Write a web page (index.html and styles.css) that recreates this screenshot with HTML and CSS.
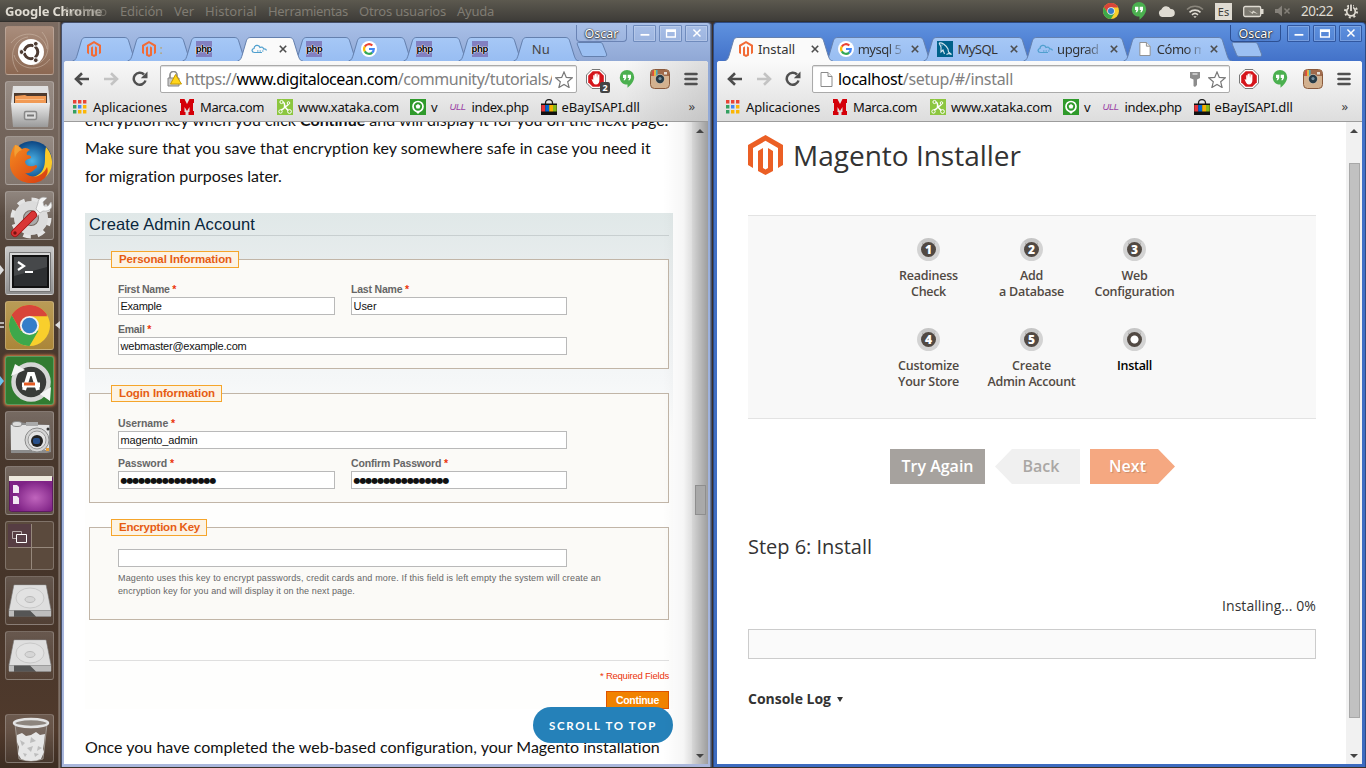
FILE: index.html
```html
<!DOCTYPE html>
<html lang="es">
<head>
<meta charset="utf-8">
<title>Magento Installer</title>
<link rel="stylesheet" href="styles.css">
</head>
<body>
<svg class="defs" width="0" height="0">
  <defs>
    <linearGradient id="gTab" x1="0" y1="0" x2="0" y2="1"><stop offset="0" stop-color="#a6c8f6"/><stop offset="1" stop-color="#98bdf2"/></linearGradient>
    <linearGradient id="gSteel" x1="0" y1="0" x2="0" y2="1"><stop offset="0" stop-color="#ededed"/><stop offset="1" stop-color="#9a9a9a"/></linearGradient>
    <linearGradient id="gFox" x1="0" y1="0" x2="1" y2="1"><stop offset="0" stop-color="#f58a1f"/><stop offset="1" stop-color="#d63c12"/></linearGradient>
    <radialGradient id="gGlobe"><stop offset="0" stop-color="#4ab4e8"/><stop offset="1" stop-color="#0b4583"/></radialGradient>
    <radialGradient id="gPurple" cx=".6" cy=".6"><stop offset="0" stop-color="#c065bd"/><stop offset="1" stop-color="#7f2386"/></radialGradient>
  </defs>
  <symbol id="magento" viewBox="0 0 35 40"><path fill="currentColor" d="M17.500 0 35 10v20l-5 3V13L17.500 5.800 5 13v20l-5-3V10z"/><path fill="currentColor" d="M10 16l5-3v20l2.500 1.500L20 33V13l5 3v20l-7.500 4L10 36z"/></symbol>
  <symbol id="google" viewBox="0 0 16 16"><circle cx="8" cy="8" r="8" fill="#fff"/><g fill="none" stroke-width="2.200"><path stroke="#ea4335" d="M3.800 5.600A4.800 4.800 0 0 1 11.300 4.500"/><path stroke="#fbbc05" d="M3.800 5.500a4.800 4.800 0 0 0 0 5"/><path stroke="#34a853" d="M3.800 10.400a4.800 4.800 0 0 0 7.400 1.200"/><path stroke="#4285f4" d="M8 8h4.800a4.800 4.800 0 0 1-1.700 3.700"/></g></symbol>
  <symbol id="docloud" viewBox="0 0 16 10"><path fill="none" stroke="#4f9fce" stroke-width="1.200" d="M11 8.500H3.500C.5 8.500.2 5 3 4.500 3 1 8 0 9 3.500c2-1 3.500 0 3.500 1.500 2-.2 3 .6 2.500 1.500"/><path stroke="#4f9fce" stroke-dasharray="1.500 1" d="M6 7h7"/></symbol>
  <symbol id="page" viewBox="0 0 12 15"><path fill="#fff" stroke="#8a8a8a" d="M.5.5h7l4 4v10H.5z"/><path fill="#eee" stroke="#8a8a8a" d="M7.500.5v4h4"/></symbol>
  <symbol id="dolphin" viewBox="0 0 16 16"><path fill="#00618a" d="M0 0h16v16H0z"/><path fill="none" stroke="#d5e6ef" stroke-width="1.100" d="M2 2c3-.8 7 2 9 6l.5 3 3 2.500-3-1-2 1M2 2l2 4v5l2-2 1.500 4"/><circle cx="5" cy="4" r=".6" fill="#fff"/></symbol>
  <symbol id="close" viewBox="0 0 8 8"><path stroke="#4d4d4d" stroke-width="1.600" d="M.8.8l6.400 6.400M7.200.8L.8 7.200"/></symbol>
  <symbol id="back" viewBox="0 0 16 14"><path fill="none" stroke="currentColor" stroke-width="2.600" d="M15 7H2.500M8 1.200L2 7l6 5.800"/></symbol>
  <symbol id="reload" viewBox="0 0 16 16"><path fill="none" stroke="#505050" stroke-width="2.500" d="M13.500 9.500A6 6 0 1 1 12 3.500"/><path fill="#505050" d="M15.500.5V7.200H8.800z"/></symbol>
  <symbol id="lock" viewBox="0 0 15 16"><path fill="none" stroke="#8d8d8d" stroke-width="1.700" d="M3 8V4a3.500 3.500 0 0 1 7 0v4"/><path fill="#c9c9c9" stroke="#858585" d="M1 7h11v8H1z"/><path fill="#ffd51a" stroke="#c79a00" d="M8.500 3.500l6 9.500H3.500z"/></symbol>
  <symbol id="star" viewBox="0 0 18 17"><path fill="#fff" stroke="#777" stroke-width="1.200" d="M9 1l2.300 5.400 5.900.5-4.500 3.900 1.400 5.700L9 13.400l-5.100 3.100 1.400-5.700L.8 6.900l5.900-.5z"/></symbol>
  <symbol id="key" viewBox="0 0 12 16"><path fill="#8c8c8c" d="M1 1h10v6L8 8.500V14l-2 2-1.500-1V8.500L1 7z"/><path stroke="#fff" stroke-width="1.200" d="M3.500 3h5"/></symbol>
  <symbol id="abp" viewBox="0 0 20 20"><path fill="#fff" stroke="#777" d="M6 .5h8L19.500 6v8L14 19.500H6L.5 14V6z"/><path fill="#d5141b" d="M6.700 2.200h6.600l4.500 4.500v6.600l-4.500 4.500H6.700l-4.500-4.500V6.700z"/><path fill="#fff" d="M5.500 10l1.700.7V6.300h1.200v3l.3-4.500H10V9l.3-4.500h1.300V9l.5-3.500h1.300V11c0 2.800-1.200 4.500-3.400 4.500-2.300 0-3.300-2-4.500-5.500z"/></symbol>
  <symbol id="hangouts" viewBox="0 0 16 18"><path fill="#4bb04f" d="M8 0a7.200 7.200 0 0 1 7.200 7.200c0 4.300-3.700 8-6.700 10.500v-3.200C3 14.600.8 11 .8 7.200A7.200 7.200 0 0 1 8 0z"/><path fill="#fff" d="M4 4.800h3.300V8L6 10.300H4.500L5.500 8H4zM8.700 4.800H12V8l-1.300 2.300H9.200l1-2.300H8.700z"/></symbol>
  <symbol id="insta" viewBox="0 0 20 20"><rect x=".5" y=".5" width="19" height="19" rx="4" fill="#d3b18f" stroke="#8a5a3c"/><path fill="#a06a4b" d="M1 7V4.500Q1 1 4.500 1h11Q19 1 19 4.500V7z"/><path fill="#e84a3b" d="M2.500 1.500h1.700V7H2.500z"/><path fill="#f2c640" d="M4.200 1h1.700v6H4.200z"/><path fill="#4daebd" d="M5.900 1h1.700v6H5.900z"/><circle cx="10" cy="10" r="5" fill="#c9b7a2"/><circle cx="10" cy="10" r="4.200" fill="#283b47"/><circle cx="10" cy="9.600" r="1.600" fill="#76909e"/><rect x="14" y="3" width="3" height="2.500" fill="#e5dfd6"/></symbol>
  <symbol id="menu" viewBox="0 0 14 14"><path stroke="#505050" stroke-width="2.600" stroke-linecap="round" d="M1.500 2h11M1.500 7h11M1.500 12h11"/></symbol>
  <symbol id="apps" viewBox="0 0 14 14"><path fill="#ea4335" d="M0 0h3.400v3.400H0zM5 0h3.400v3.400H5zM10 0h3.400v3.400H10z"/><path fill="#34a060" d="M0 5h3.400v3.400H0zM0 10h3.400v3.400H0z"/><path fill="#4285f4" d="M5 5h3.400v3.400H5z"/><path fill="#fbb605" d="M10 5h3.400v3.400H10zM5 10h3.400v3.400H5zM10 10h3.400v3.400H10z"/></symbol>
  <symbol id="marca" viewBox="0 0 14 16"><path fill="#d40009" d="M0 0h4.500L7 5l2.500-5H14v4h-1v8h1v4H8.500v-3h1V8L7 12 4.500 8v5h1v3H0v-4h1V4H0z"/></symbol>
  <symbol id="xataka" viewBox="0 0 16 16"><path fill="#8cc63f" d="M0 0h16v16H0z"/><path fill="none" stroke="#fff" stroke-width="1.500" d="M5 3c2 0 3 1.500 2.500 5C7 11 5 9.500 3.500 12M7.500 8c2-2 4 0 4-4M8 8l4 4.500"/><g fill="#8cc63f" stroke="#fff"><circle cx="4.500" cy="3" r="1.600"/><circle cx="11.500" cy="4" r="1.300"/><circle cx="3.500" cy="12.500" r="1.700"/><circle cx="12.500" cy="12.500" r="1.900"/></g></symbol>
  <symbol id="ball" viewBox="0 0 16 16"><path fill="#2f9a2b" d="M0 0h16v16H0z"/><circle cx="8" cy="7.500" r="5" fill="none" stroke="#fff" stroke-width="1.700"/><path fill="#fff" d="M8 5l2.400 1.700-.9 2.800h-3l-.9-2.800zM6 13h4l-2 2z"/></symbol>
  <symbol id="ebay" viewBox="0 0 16 16"><path fill="none" stroke="#222" stroke-width="1.300" d="M4.500 6V4a3.500 3.500 0 0 1 7 0v2"/><path fill="#111" d="M0 4.500h16V16H0z"/><path fill="#e53238" d="M.3 6h4v6.500h-4z"/><path fill="#0064d2" d="M4.300 6h3.900v6.500H4.300z"/><path fill="#f5af02" d="M8.200 6H12v6.500H8.200z"/><path fill="#86b817" d="M12 6h3.700v6.500H12z"/></symbol>
  <symbol id="tab55" viewBox="0 0 66 24"><path d="M.5 24C4 23.500 4.500 20 5.500 17L9 5C10 1.500 11 .5 14 .5H52C55 .5 56 1.500 57 5l4 13c1 3 2 6 5 6"/></symbol>
  <symbol id="tab100" viewBox="0 0 110 24"><path d="M.5 24C4 23.500 4.500 20 5.500 17L9 5C10 1.500 11 .5 14 .5H95C98 .5 99 1.500 100 5l4 13c1 3 2 6 5 6"/></symbol>
  <symbol id="newtab" viewBox="0 0 32 15"><path d="M2.500.5H24c2 0 2.500 1 3 2.500L30.500 12c.5 1.500 0 2.500-2 2.500H9c-2 0-3-.5-3.500-2L1.500 3C1 1.500 1 .5 2.500.5z"/></symbol>
  <symbol id="chrome" viewBox="0 0 40 40"><circle cx="20" cy="20" r="20" fill="#f8cf2c"/><path fill="#d8453a" d="M2.700 10A20 20 0 0 1 37.300 10H20L11.300 25z"/><path fill="#3da84b" d="M2.700 10A20 20 0 0 0 20 40L28.700 25H11.300z"/><path fill="#d8453a" d="M2.700 10A20 20 0 0 1 37.300 11H20v5l-8.700 4z"/><circle cx="20" cy="20" r="9.300" fill="#f1f1f1"/><circle cx="20" cy="20" r="7.500" fill="#357dc9"/></symbol>
  <symbol id="disk" viewBox="0 0 44 34"><path fill="url(#gSteel)" stroke="#888" stroke-width=".7" d="M6 1h32l5 25v6H1v-6z"/><path fill="#555" d="M1 26.500h42v6H1z"/><path fill="#bdbdbd" d="M1 26.500h5v6H1zM22 26.500h21v6H28z"/><path fill="#dedede" d="M6.500 1.500h31l5 24.500h-41z"/><ellipse cx="22" cy="14" rx="14" ry="10" fill="#e2e2e2" stroke="#c9c9c9"/><ellipse cx="22" cy="15.500" rx="5" ry="3" fill="#d6d6d6" stroke="#bababa"/></symbol>
  <symbol id="win-min" viewBox="0 0 23 17"><path stroke="#fff" stroke-width="2" d="M7 10h10"/></symbol>
  <symbol id="win-max" viewBox="0 0 23 17"><path fill="none" stroke="#fff" stroke-width="1.500" d="M7 4.500h10v8H7zM7 6h10"/></symbol>
  <symbol id="win-x" viewBox="0 0 23 17"><path stroke="#fff" stroke-width="1.700" d="M8 4l8 8M16 4l-8 8"/></symbol>
</svg>

<header class="panel">
  <div class="menubar">
    <b class="app" data-w="97">Google Chrome</b>
    <span class="first" data-w="44">Archivo</span><span data-w="43">Edición</span><span data-w="20">Ver</span><span data-w="52">Historial</span><span data-w="80">Herramientas</span><span data-w="87">Otros usuarios</span><span data-w="37">Ayuda</span>
  </div>
  <div class="tray">
    <svg width="16" height="16"><use href="#chrome"/></svg>
    <svg width="16" height="18"><use href="#hangouts"/></svg>
    <svg width="17" height="12" viewBox="0 0 17 12"><path fill="#dfdbd2" d="M4 12a4 4 0 0 1-.6-7.600A5 5 0 0 1 12.600 4 4 4 0 0 1 13 12z"/></svg>
    <svg width="18" height="13" viewBox="0 0 18 13"><g fill="none" stroke-width="1.600"><path stroke="#8a867c" d="M1 4.500a11.500 11.500 0 0 1 16 0"/><path stroke="#dfdbd2" d="M3.500 7.300a8 8 0 0 1 11 0M6 9.800a4.500 4.500 0 0 1 6 0"/></g><path fill="#dfdbd2" d="M9 13l-1.700-1.800h3.400z"/></svg>
    <span class="lang">Es</span>
    <svg width="21" height="13" viewBox="0 0 21 13"><rect x=".7" y="1.500" width="17" height="10" rx="1.500" fill="#7b786f" stroke="#dfdbd2" stroke-width="1.300"/><path fill="#dfdbd2" d="M18 4h2.500v5H18zM5 5l4 2.500 1-2L15 9l-4.500-1.500-1 1.500z"/></svg>
    <svg width="16" height="12" viewBox="0 0 16 12"><path fill="#85817a" d="M0 4h3l4-3.500v11L3 8H0z"/><path stroke="#85817a" stroke-width="1.500" d="M9.500 3.500l5 5M14.500 3.500l-5 5"/></svg>
    <span class="clock" data-w="32">20:22</span>
    <svg width="14" height="15" viewBox="0 0 14 15"><circle cx="7" cy="7.500" r="4.300" fill="none" stroke="#dfdbd2" stroke-width="1.700"/><circle cx="7" cy="7.500" r="6" fill="none" stroke="#dfdbd2" stroke-width="2" stroke-dasharray="2 2.710"/><path stroke="#45433e" stroke-width="4" d="M7 0v6"/><path stroke="#dfdbd2" stroke-width="1.800" d="M7 .5v6.500"/></svg>
  </div>
</header>

<nav class="launcher">
  <div class="tile dash"><svg width="49" height="49" viewBox="0 0 49 49"><g fill="none" stroke="#cdb9aa" opacity=".55"><path d="M12 45C2 32 6 12 22 10M5 16C16 2 38 5 41 22M36 5c11 13 6 31-9 33M44 32C34 46 12 43 8 28"/></g><circle cx="25" cy="25" r="13" fill="#fff"/><circle cx="25" cy="25" r="6.800" fill="none" stroke="#4d3b32" stroke-width="3"/><path stroke="#fff" stroke-width="1.400" d="M25 25L15 25M25 25l5-9M25 25l5 9"/><g fill="#4d3b32" stroke="#fff"><circle cx="15.500" cy="25" r="2.400"/><circle cx="29.800" cy="16.800" r="2.400"/><circle cx="29.800" cy="33.200" r="2.400"/></g></svg></div>
  <div class="tile pale"><svg width="49" height="49" viewBox="0 0 49 49"><path fill="#e1e1e1" d="M7 4h35l2 18H5z"/><path fill="#4e3a2e" d="M8 11h33v12H8z"/><path fill="#f19a55" d="M9 14l10-1 2 1h19v8H9z"/><path fill="#fac08b" d="M10 17h28v1H10z"/><path fill="url(#gSteel)" d="M5 21h39l-2 24H7z"/><rect x="18.500" y="29.500" width="12" height="8" rx="1.500" fill="#ddd" stroke="#888" stroke-width="1.500"/><path stroke="#777" stroke-width="2" d="M21 33.500h7"/></svg></div>
  <div class="tile pale"><svg width="49" height="49" viewBox="0 0 49 49"><circle cx="26" cy="24" r="20" fill="url(#gGlobe)"/><path fill="#fbc928" d="M40 10c9 10 8 25-3 32-8 5-20 3-26-3 12 4 24 1 27-9 2-7 0-12 2-20z"/><path fill="url(#gFox)" d="M9 8c3 0 5 2 7 4 3-2 6-1 8 1-3 1-4 3-3 5 3 0 4 1 4 3-2 1-5 1-6 4 1 5 7 5 11 3 2 1 1 3-1 4-3 3-6 5-10 4 8 7 18 3 22-6 3 8-4 15-13 16C13 47 3 37 4 25 4 18 6 12 9 8z"/><path fill="#f7c14a" d="M9 8c3 0 5 3 7 5-4 1-6 4-7 8-1-4-1-9 0-13z" opacity=".5"/></svg></div>
  <div class="tile pale"><svg width="49" height="49" viewBox="0 0 49 49"><circle cx="25" cy="26" r="17" fill="none" stroke="#e4e4e4" stroke-width="7" stroke-dasharray="7 6.350"/><circle cx="25" cy="26" r="12.500" fill="none" stroke="#dcdcdc" stroke-width="9"/><circle cx="25" cy="26" r="7" fill="#aaa"/><path stroke="#eee" stroke-width="4.500" d="M24 28L38 14"/><path fill="#f4f4f4" stroke="#aaa" stroke-width=".7" d="M32 11c0-5 5-7 9-5l-4 4 1 4 4 0 3-4c3 6-2 10-8 9l-3 2-4-4z"/><path stroke="#9e1111" stroke-width="8" stroke-linecap="round" d="M9 41L27 23"/><path stroke="#d93535" stroke-width="6.500" stroke-linecap="round" d="M9 41L27 23"/><circle cx="9" cy="41" r="1.700" fill="#711"/></svg></div>
  <div class="tile steel"><svg width="49" height="49" viewBox="0 0 49 49"><path fill="#d7d7d7" stroke="#777" d="M3.500 5.500h41v39h-41z"/><path fill="#2d2f31" stroke="#111" stroke-width="2" d="M7 9h35v31H7z"/><path fill="#fff" opacity=".12" d="M8 10h33v10L8 29z"/><path fill="none" stroke="#fff" stroke-width="2.200" d="M12 15l6 4-6 4M19 25h8"/></svg></div>
  <div class="tile gold"><svg width="41" height="41"><use href="#chrome"/></svg></div>
  <div class="tile green"><svg width="49" height="49" viewBox="0 0 49 49"><circle cx="25" cy="25" r="17.500" fill="#393b39" stroke="#d6d6d6" stroke-width="4.500"/><path fill="#f5f5f5" d="M5 19L9 7l10 6zM45 30l-1 14-10-7z"/><path fill="none" stroke="#fff" stroke-width="4" d="M18 33l5-16h4l5 16"/><path stroke="#fff" stroke-width="5" d="M16 28h18"/><path stroke="#e65c25" stroke-width="3" d="M18 27h11"/></svg></div>
  <div class="tile pale"><svg width="49" height="49" viewBox="0 0 49 49"><path fill="#8c8c8c" d="M4 13l8-3 16 2 16 1 1 27-4 1H5z"/><path fill="#e2e2e2" d="M5 13h38v25H5z"/><ellipse cx="11" cy="12" rx="5" ry="2.500" fill="#ddd" stroke="#888"/><path fill="#aaa" d="M20 10h12v4H20z"/><circle cx="31" cy="28" r="12" fill="#d4d4d4" stroke="#8a8a8a"/><circle cx="31" cy="28" r="9" fill="#e3e3e3" stroke="#999"/><circle cx="31" cy="29" r="6" fill="#222"/><rect x="27" y="26" width="7" height="6" rx="2" fill="#274f8a"/><circle cx="42" cy="17" r="1.500" fill="#333"/><path fill="#e99e35" d="M40 36h3v3h-3z"/></svg></div>
  <div class="tile pale"><svg width="49" height="49" viewBox="0 0 49 49"><path fill="url(#gPurple)" stroke="#5d1b62" d="M3.500 10.500h43v33l-2 1h-39l-2-1z"/><path fill="#efebe0" d="M3 9h43v5H3z"/><path fill="#f3e8f3" d="M7 18h4l2 2v6H7zM7 29h4l2 2v6H7z"/></svg></div>
  <div class="tile spaces"><svg width="49" height="49" viewBox="0 0 49 49"><path fill="#563d43" d="M2 2h23v23H2z"/><path stroke="#96887c" d="M25.500 2v45M2 25.500h46"/><path fill="none" stroke="#b6abab" d="M6.500 9.500h9v7h-9z"/><path fill="#594149" stroke="#fff" d="M10.500 12.500h10v8h-10z"/></svg></div>
  <div class="tile"><svg width="44" height="34"><use href="#disk"/></svg></div>
  <div class="tile"><svg width="44" height="34"><use href="#disk"/></svg></div>
  <div class="tile trash"><svg width="49" height="49" viewBox="0 0 49 49"><path fill="#aaa" fill-opacity=".25" stroke="#b5b0ab" stroke-width=".7" d="M9 9h32l-4 35q-12 4-24 0z"/><path fill="#e6e6e6" d="M11 20l5-2 4 3 5-1 5-3 4 3 5-1-1 9-1 6 1 3-3 7q-10 4-20 0l-3-5 1-7-2-5z"/><path fill="#bdbdbd" d="M14 25l5 3-3 3zM25 22l5 4-6 2zM21 33l6-2-2 6zM32 31l4 2-5 3zM17 38l4 1-2 3zM28 38l5 1-4 3z"/><ellipse cx="25" cy="8" rx="17" ry="4" fill="#8d857e" stroke="#e4e4e4" stroke-width="2.500"/></svg></div>
  <svg class="pips" width="60" height="160" viewBox="0 0 60 160"><path fill="#ddd" d="M0 20l4 5-4 5zM60 76l-5 4 5 4z"/><path stroke="#ddd" stroke-width="1.500" d="M0 78h4M0 82h4"/><path fill="#6fc0ec" d="M0 131l4 5-4 5z"/></svg>
</nav>

<section class="window idle">
  <div class="titlebar">
    <div class="tabs">
      <div class="tab t55"><svg class="shape"><use href="#tab55"/></svg><svg class="mg" width="14" height="16"><use href="#magento"/></svg></div>
      <div class="tab t55"><svg class="shape"><use href="#tab55"/></svg><svg class="mg" width="14" height="16"><use href="#magento"/></svg><span class="hint">:</span></div>
      <div class="tab t55"><svg class="shape"><use href="#tab55"/></svg><i class="php">php</i></div>
      <div class="tab t55 on"><svg class="shape"><use href="#tab55"/></svg><svg width="16" height="10"><use href="#docloud"/></svg><svg class="x" width="8" height="8"><use href="#close"/></svg></div>
      <div class="tab t55"><svg class="shape"><use href="#tab55"/></svg><i class="php">php</i></div>
      <div class="tab t55"><svg class="shape"><use href="#tab55"/></svg><svg width="16" height="16"><use href="#google"/></svg></div>
      <div class="tab t55"><svg class="shape"><use href="#tab55"/></svg><i class="php">php</i></div>
      <div class="tab t55"><svg class="shape"><use href="#tab55"/></svg><i class="php">php</i></div>
      <div class="tab t55"><svg class="shape"><use href="#tab55"/></svg><span class="label solo">Nu</span></div>
      <svg class="newtab" width="32" height="15"><use href="#newtab"/></svg>
    </div>
    <div class="controls"><span class="user">Oscar</span><svg><use href="#win-min"/></svg><svg><use href="#win-max"/></svg><svg><use href="#win-x"/></svg></div>
  </div>
  <div class="client">
    <div class="chrome">
      <div class="toolbar">
        <svg class="bk" width="16" height="14"><use href="#back"/></svg><svg class="fw" width="16" height="14"><use href="#back"/></svg><svg class="rl" width="16" height="16"><use href="#reload"/></svg>
        <div class="omni"><svg width="15" height="16"><use href="#lock"/></svg><span class="url"><span data-w="369">https://<em>www.digitalocean.com</em>/community/tutorials/</span></span><svg class="st" width="18" height="17"><use href="#star"/></svg></div>
        <div class="exts"><div class="abp"><svg width="20" height="20"><use href="#abp"/></svg><b>2</b></div><svg width="16" height="18"><use href="#hangouts"/></svg><svg width="20" height="20"><use href="#insta"/></svg><svg width="14" height="14"><use href="#menu"/></svg></div>
      </div>
      <div class="bookmarks">
        <a class="b1"><svg width="14" height="14"><use href="#apps"/></svg><span data-w="74">Aplicaciones</span></a><a class="b2"><svg width="14" height="16"><use href="#marca"/></svg><span data-w="64">Marca.com</span></a><a class="b3"><svg width="16" height="16"><use href="#xataka"/></svg><span data-w="101">www.xataka.com</span></a><a class="b4"><svg width="16" height="16"><use href="#ball"/></svg><span>v</span></a><a class="b5"><i class="ull">ULL</i><span data-w="57">index.php</span></a><a class="b6"><svg width="16" height="16"><use href="#ebay"/></svg><span data-w="78">eBayISAPI.dll</span></a><span class="more">»</span>
      </div>
    </div>
    <div class="page article">
      <p class="intro"><span data-w="584">encryption key when you click <b>Continue</b> and will display it for you on the next page.</span><br><span data-w="566">Make sure that you save that encryption key somewhere safe in case you need it</span><br><span data-w="197">for migration purposes later.</span></p>
      <div class="shot">
        <h2><span data-w="166">Create Admin Account</span></h2>
        <div class="set s1">
          <h3><span data-w="113">Personal Information</span></h3>
          <div class="row"><label><span data-w="58">First Name <s>*</s></span><div class="in"><span data-w="41">Example</span></div></label><label><span data-w="58">Last Name <s>*</s></span><div class="in"><span data-w="23">User</span></div></label></div>
          <div class="row"><label class="wide"><span data-w="33">Email <s>*</s></span><div class="in"><span data-w="126">webmaster@example.com</span></div></label></div>
        </div>
        <div class="set s2">
          <h3><span data-w="96">Login Information</span></h3>
          <div class="row"><label class="wide"><span data-w="57">Username <s>*</s></span><div class="in"><span data-w="77">magento_admin</span></div></label></div>
          <div class="row"><label><span data-w="56">Password <s>*</s></span><div class="in dots"><span data-w="95">●●●●●●●●●●●●●●●●</span></div></label><label><span data-w="97">Confirm Password <s>*</s></span><div class="in dots"><span data-w="95">●●●●●●●●●●●●●●●●</span></div></label></div>
        </div>
        <div class="set s3">
          <h3><span data-w="81">Encryption Key</span></h3>
          <div class="in long"></div>
          <p><span data-w="483">Magento uses this key to encrypt passwords, credit cards and more. If this field is left empty the system will create an</span><br><span data-w="237">encryption key for you and will display it on the next page.</span></p>
        </div>
        <div class="foot"><span class="req" data-w="69">* Required Fields</span><span class="go"><span data-w="43">Continue</span></span></div>
      </div>
      <p class="outro"><span data-w="575">Once you have completed the web-based configuration, your Magento installation</span></p>
      <div class="pill"><span data-w="108">SCROLL TO TOP</span></div>
      <div class="shade"></div>
      <div class="scroll sc1"><i class="up"></i><i class="thumb"></i><i class="down"></i></div>
    </div>
  </div>
</section>

<section class="window active">
  <div class="titlebar">
    <div class="tabs">
      <div class="tab t100 on"><svg class="shape"><use href="#tab100"/></svg><svg class="mg" width="14" height="16"><use href="#magento"/></svg><span class="label"><span data-w="37">Install</span></span><svg class="x" width="8" height="8"><use href="#close"/></svg></div>
      <div class="tab t100"><svg class="shape"><use href="#tab100"/></svg><svg width="16" height="16"><use href="#google"/></svg><span class="label fade">mysql 5</span><svg class="x" width="8" height="8"><use href="#close"/></svg></div>
      <div class="tab t100"><svg class="shape"><use href="#tab100"/></svg><svg width="16" height="16"><use href="#dolphin"/></svg><span class="label"><span data-w="40">MySQL</span></span><svg class="x" width="8" height="8"><use href="#close"/></svg></div>
      <div class="tab t100"><svg class="shape"><use href="#tab100"/></svg><svg width="16" height="10"><use href="#docloud"/></svg><span class="label fade">upgrad</span><svg class="x" width="8" height="8"><use href="#close"/></svg></div>
      <div class="tab t100"><svg class="shape"><use href="#tab100"/></svg><svg width="16" height="14"><use href="#page"/></svg><span class="label fade">Cómo m</span><svg class="x" width="8" height="8"><use href="#close"/></svg></div>
      <svg class="newtab" width="32" height="15"><use href="#newtab"/></svg>
    </div>
    <div class="controls"><span class="user">Oscar</span><svg><use href="#win-min"/></svg><svg><use href="#win-max"/></svg><svg><use href="#win-x"/></svg></div>
  </div>
  <div class="client">
    <div class="chrome">
      <div class="toolbar">
        <svg class="bk" width="16" height="14"><use href="#back"/></svg><svg class="fw" width="16" height="14"><use href="#back"/></svg><svg class="rl" width="16" height="16"><use href="#reload"/></svg>
        <div class="omni"><svg width="15" height="15"><use href="#page"/></svg><span class="url short"><span data-w="175"><em>localhost</em>/setup/#/install</span></span><svg class="ky" width="12" height="16"><use href="#key"/></svg><svg class="st" width="18" height="17"><use href="#star"/></svg></div>
        <div class="exts"><div class="abp"><svg width="20" height="20"><use href="#abp"/></svg></div><svg width="16" height="18"><use href="#hangouts"/></svg><svg width="20" height="20"><use href="#insta"/></svg><svg width="14" height="14"><use href="#menu"/></svg></div>
      </div>
      <div class="bookmarks">
        <a class="b1"><svg width="14" height="14"><use href="#apps"/></svg><span data-w="74">Aplicaciones</span></a><a class="b2"><svg width="14" height="16"><use href="#marca"/></svg><span data-w="64">Marca.com</span></a><a class="b3"><svg width="16" height="16"><use href="#xataka"/></svg><span data-w="101">www.xataka.com</span></a><a class="b4"><svg width="16" height="16"><use href="#ball"/></svg><span>v</span></a><a class="b5"><i class="ull">ULL</i><span data-w="57">index.php</span></a><a class="b6"><svg width="16" height="16"><use href="#ebay"/></svg><span data-w="78">eBayISAPI.dll</span></a><span class="more">»</span>
      </div>
    </div>
    <div class="page installer">
      <h1><svg width="35" height="40"><use href="#magento"/></svg><span data-w="228">Magento Installer</span></h1>
      <ol class="steps">
        <li><b>1</b><span data-w="59">Readiness</span><span data-w="35">Check</span></li>
        <li><b>2</b><span data-w="23">Add</span><span data-w="65">a Database</span></li>
        <li><b>3</b><span data-w="26">Web</span><span data-w="80">Configuration</span></li>
        <li><b>4</b><span data-w="61">Customize</span><span data-w="61">Your Store</span></li>
        <li><b>5</b><span data-w="39">Create</span><span data-w="88">Admin Account</span></li>
        <li class="now"><b></b><span data-w="35">Install</span></li>
      </ol>
      <div class="btns"><span class="again"><span data-w="72">Try Again</span></span><span class="prev"><span data-w="37">Back</span></span><span class="next"><span data-w="37">Next</span></span></div>
      <h2><span data-w="124">Step 6: Install</span></h2>
      <p class="status"><span data-w="94">Installing... 0%</span></p>
      <div class="bar"></div>
      <p class="log"><span data-w="83">Console Log</span><i></i></p>
      <div class="scroll sc2"><i class="up"></i><i class="thumb"></i><i class="down"></i></div>
    </div>
  </div>
</section>
<script src="fit.js"></script>
</body>
</html>
```

FILE: styles.css
```css
* { box-sizing: border-box; }
body { margin: 0; width: 1366px; height: 768px; overflow: hidden; background: #3b3029; font-family: "Noto Sans", sans-serif; }
h1, h2, h3, p, ol { margin: 0; padding: 0; font-weight: normal; }
i, em { font-style: normal; }
s { text-decoration: none; color: #eb340a; }
svg { display: block; flex: none; }
[data-w] { display: inline-block; white-space: nowrap; flex: none; }
.defs { position: absolute; }

/* Top panel */
.panel { height: 22px; display: flex; justify-content: space-between; align-items: center; background: linear-gradient(#5c594f, #3f3d39 92%, #2c2a27); }
.menubar { display: flex; font-size: 13px; line-height: 20px; color: #807c73; padding-left: 5px; }
.menubar span { margin-right: 11px; }
.menubar .app { color: #dfdbd2; margin-right: -39px; mask-image: linear-gradient(90deg, #000 60%, #0009); }
.menubar .first { opacity: .75; margin-right: 13px; }
.tray { display: flex; align-items: center; gap: 11px; padding-right: 8px; }
.tray svg:nth-child(2) { margin-left: 1px; }
.lang { width: 17px; height: 17px; background: #dfdbd2; color: #3c3b37; font-size: 11px; line-height: 17px; text-align: center; }
.clock { font-size: 13.500px; line-height: 18px; color: #dfdbd2; margin-left: -1px; }

/* Launcher */
.launcher { position: absolute; left: 0; top: 22px; width: 61px; height: 746px; padding: 4px 0 0 5px; display: flex; flex-direction: column; gap: 6px; background: linear-gradient(90deg, transparent 58px, #94877e 59px, #40332c 61px), linear-gradient(#7b6b61, #6f6158 22%, #584a40 26%, #4a3a2f 40%, #46352a 75%, #503a2c 95%, #3d2d22); }
.tile { width: 49px; height: 49px; flex: none; display: grid; place-items: center; border: 1px solid #ffffff3a; border-radius: 3px; background: linear-gradient(#ffffff2b, #ffffff0d); }
.dash { background: linear-gradient(#a98d7c, #8c6852); }
.pale { background: linear-gradient(#ffffff40, #ffffff22); }
.steel { background: linear-gradient(#c9c9c9, #8f8f8f); }
.gold { background: linear-gradient(#b99b56, #ab8639); }
.green { background: #317c31; box-shadow: 0 0 3px 1px #d97e48; }
.spaces { background: #5b4a3d; }
.trash { margin-top: 28px; }
.pips { position: absolute; left: 0; top: 223px; }

/* Browser windows */
.window { position: absolute; top: 22px; width: 650px; height: 745px; padding: 0 3px 3px; border-radius: 4px 4px 0 0; }
.idle { left: 61px; width: 651px; border: 1px solid #46506b; border-bottom: 0; padding: 0 3px 3px 2px; background: linear-gradient(#a9c0e8, #90a8d5 38px, #9db2de 300px, #aab7dc); box-shadow: inset -1px 0 #647795; }
.active { left: 713px; width: 653px; border: 1px solid #2c4b85; border-bottom: 0; background: linear-gradient(#5f92df, #4372c9 38px, #3d6bbf); }
.titlebar { height: 38px; padding-top: 1px; display: flex; justify-content: space-between; align-items: flex-start; }
.tabs { display: flex; padding: 13px 0 0 8px; align-items: flex-end; height: 37px; margin-right: -60px; }
.active .tabs { padding-left: 7px; }
.tab { position: relative; height: 24px; display: flex; align-items: center; fill: url(#gTab); flex: none; }
.tab > * { position: relative; }
.tab .shape { position: absolute; inset: 0; width: 100%; height: 100%; stroke: #6480ae; }
.t55 { width: 66px; margin-right: -10.850px; padding-left: 13.500px; }
.t100 { width: 110px; margin-right: -10.300px; padding-left: 14px; }
.on { z-index: 2; fill: #fafafa; }
.mg { color: #f26b36; margin-left: 1px; margin-right: 1px; }
.t55 .x { margin-left: 12px; }
.php { width: 16px; height: 16px; background: #8280c0; font: bold 9.500px/15px "Liberation Sans", sans-serif; letter-spacing: -.4px; text-align: center; color: #000; text-shadow: 0 0 1px #fff, 0 0 1px #fff, 0 0 1px #fff, 0 0 1px #fff; }
.hint { font-size: 12px; margin-left: 3px; color: #b7a26d; }
.label { font-size: 13px; line-height: 20px; width: 44px; margin: 0 9px 0 4px; overflow: hidden; white-space: nowrap; color: #333; }
.label.solo { width: 18px; margin-left: 5px; color: #444; }
.fade { mask-image: linear-gradient(90deg, #000 65%, #0003); letter-spacing: -.5px; }
.newtab { fill: #9cc0f2; stroke: #6480ae; margin: 0 0 4px 8px; }
.controls { display: flex; gap: 3px; padding-top: 1px; position: relative; }
.controls svg { width: 23px; height: 17px; border: 1px solid #6f8bbd; border-radius: 1px; box-shadow: inset 0 0 0 1px #ffffff33; }
.active .controls svg { border-color: #3157a0; }
.user { width: 51px; height: 17px; margin-right: 3px; text-align: center; font-size: 12.500px; line-height: 17px; color: #fff; border: 1px solid #6a83b4; border-top: 0; border-radius: 0 0 4px 4px; text-shadow: 0 0 1px #222, 0 0 1px #222, 0 1px 2px #222; }
.active .user { border-color: #2d5093; }
.client { height: 703px; background: #fff; border-radius: 3px 3px 0 0; overflow: hidden; display: flex; flex-direction: column; }
.chrome { height: 61px; flex: none; background: linear-gradient(#fafafa, #dedede 58px); border-bottom: 1px solid #9c9c9c; }
.idle .chrome { background: linear-gradient(90deg, transparent 560px, #0000001c), linear-gradient(#f8f8f8, #dedede 58px); }
.toolbar { height: 36px; display: flex; align-items: center; padding-left: 10px; }
.bk { color: #4c4c4c; margin-right: 13px; }
.fw { color: #c3c3c3; transform: scaleX(-1); margin-right: 13px; }
.rl { margin-right: 12px; }
.omni { width: 417px; flex: none; height: 28px; border: 1px solid #aaa; border-radius: 2px; background: #fff; box-shadow: inset 0 1px 1px #ddd; display: flex; align-items: center; padding-left: 6px; }
.url { font-size: 16px; line-height: 24px; color: #808080; margin-left: 3px; width: 367px; overflow: hidden; white-space: nowrap; flex: none; }
.active .omni { width: 418px; margin-left: -1px; }
.url.short { width: 351px; margin-left: 4px; }
.url em { color: #000; }
.ky { margin: 0 7px 0 0; }
.omni .st { margin-left: 3px; }
.omni .ky + .st { margin-left: 0; }
.exts { display: flex; align-items: center; margin-left: 9px; flex: none; }
.exts > * { margin-right: 14px; }
.exts > .abp { margin-right: 13px; }
.exts > svg:nth-child(2) { margin-right: 15px; }
.abp { position: relative; }
.abp b { position: absolute; right: -4px; bottom: -4px; width: 10px; height: 11px; border-radius: 2px; background: #444; color: #fff; font: bold 9px/11px "Noto Sans", sans-serif; text-align: center; }
.bookmarks { height: 18px; margin-top: 1px; display: flex; align-items: center; font-size: 13px; color: #111; padding-left: 9px; }
.bookmarks a { display: flex; align-items: center; gap: 6px; margin-right: 13px; line-height: 18px; flex: none; }
.bookmarks .b3 { gap: 5px; margin-right: 11px; }
.bookmarks .b4 { gap: 5px; margin-right: 12px; }
.bookmarks .b5 { gap: 6px; margin-right: 12px; }
.bookmarks .b6 { gap: 5px; }
.ull { width: 16px; font: italic 9.500px/16px "Liberation Sans", sans-serif; color: #9a3fa5; letter-spacing: -.5px; }
.more { margin: -3px 0 0 36px; color: #444; }
.page { position: relative; flex: 1; overflow: hidden; }

/* Tutorial article */
.article { padding-left: 21px; }
.intro, .outro { font: 16px/28px Lato, sans-serif; color: #111; }
.intro { margin-top: -16px; height: 84px; }
.shot { margin-top: 23px; width: 588px; height: 496px; padding: 0 4px; font-family: "Liberation Sans", sans-serif; color: #666; background: linear-gradient(#e0e8e8, #eceff0 16%, #f5f7f8 34%, #fefefd 45%); }
.shot h2 { height: 23px; border-bottom: 1px solid #c8cfd0; font-size: 16.500px; line-height: 23px; color: #0a263c; }
.set { border: 1px solid #c1b5a7; background: #fbfaf7; padding-left: 28px; }
.shot h3 { width: max-content; height: 17px; margin: -9px 0 0 -7px; padding: 0 6px 0 7px; border: 1px solid #f5a52b; background: #fcf3e4; color: #e65c13; font-size: 11.500px; line-height: 15px; font-weight: bold; }
.s1 { margin-top: 23px; height: 110px; }
.s2 { margin-top: 24px; height: 110px; }
.s3 { margin-top: 24px; height: 93px; }
.row { display: flex; gap: 16px; height: 40px; }
.s1 h3, .s2 h3 { margin-bottom: 15px; }
.row label { width: 217px; font-size: 10.500px; line-height: 13px; font-weight: bold; }
.row .wide { width: 449px; }
.row label + label { width: 216px; }
.in { height: 18px; border: 1px solid #b9b9b9; background: #fff; padding-left: 1.500px; font-size: 11px; line-height: 16px; color: #111; font-weight: normal; }
.dots { font-size: 8px; line-height: 17px; font-family: "DejaVu Sans", sans-serif; }
.row label > span { display: block; height: 14px; }
.shot .long { width: 449px; margin-top: 13px; }
.s3 p { font-size: 9px; line-height: 13px; margin-top: 5px; }
.foot { border-top: 1px solid #dfdfdf; margin-top: 40px; padding-top: 8px; display: flex; flex-direction: column; align-items: flex-end; font-size: 9.500px; line-height: 14px; }
.req { color: #eb340a; }
.go { margin-top: 8px; width: 63px; height: 18px; border: 1px solid #de5400; background: #f18200; color: #fff; font-size: 10.500px; font-weight: bold; line-height: 16px; text-align: center; }
.outro { margin-top: 24px; }
.pill { position: absolute; left: 469px; top: 585px; width: 140px; height: 36px; border-radius: 18px; background: #2581b9; color: #fff; text-align: center; font: bold 11.500px/37px Lato, sans-serif; }
.shade { position: absolute; right: 0; top: 0; width: 45px; height: 100%; background: linear-gradient(90deg, #0000, #00000009 45%, #00000022 65%, #0000005c); }
.scroll { position: absolute; top: 0; right: 0; width: 16px; height: 100%; display: flex; flex-direction: column; align-items: center; background: #00000008; }
.sc2 { background: #f1f1f1; }
.up { border: 4px solid transparent; border-top: 0; border-bottom: 4px solid #444; margin-top: 7px; }
.down { border: 4px solid transparent; border-bottom: 0; border-top: 4px solid #444; margin-top: auto; margin-bottom: 6px; }
.thumb { width: 11px; border: 1px solid #8e8e8e; background: #a9a9a9; }
.sc1 .thumb { height: 30px; margin-top: 352px; }
.sc2 .thumb { height: 555px; margin-top: 30px; background: #c1c1c1; border-color: #a8a8a8; }

/* Installer */
.installer { padding: 13px 46px 0 31px; font-family: "Open Sans", sans-serif; color: #333; }
.installer h1 { display: flex; gap: 10px; align-items: center; height: 40px; font-size: 28px; line-height: 40px; }
.installer h1 svg { color: #eb5f25; }
.steps { list-style: none; margin-top: 40px; height: 204px; border: solid #e3e3e3; border-width: 1px 0; background: #f8f8f8; display: grid; grid-template-columns: 103px 103px 103px; grid-auto-rows: 90px; justify-content: center; padding: 22px 1px 0 0; }
.steps li { display: flex; flex-direction: column; align-items: center; font-size: 12.500px; line-height: 16px; font-weight: 600; color: #514943; }
.steps b { width: 23px; height: 23px; border-radius: 50%; border: 4px solid #d3d3d3; border-top-color: #c6c6c6; background: #514943; color: #fff; font-size: 12px; line-height: 15px; text-align: center; margin-bottom: 7px; flex: none; }
.steps .now { color: #000; }
.now b { background: radial-gradient(#fff 3.500px, #514943 4.500px); }
.btns { display: flex; gap: 10px; margin: 30px 0 0 142px; font-size: 16px; line-height: 35px; font-weight: 600; text-align: center; }
.btns > span { width: 85px; height: 35px; }
.btns .again { width: 95px; background: #a6a29e; color: #fff; }
.prev { background: #f0f0f0; color: #aaa7a4; clip-path: polygon(17px 0, 100% 0, 100% 100%, 17px 100%, 0 50%); padding-left: 7px; }
.next { background: #f5a881; color: #fff; clip-path: polygon(0 0, 68px 0, 100% 50%, 68px 100%, 0 100%); padding-right: 10px; text-shadow: 1px 1px 1px #c98a69; }
.installer h2 { margin-top: 49px; font-size: 20px; line-height: 28px; }
.status { margin-top: 35px; text-align: right; font-size: 14px; line-height: 20px; }
.bar { margin-top: 13px; height: 30px; border: 1px solid #ccc; background: #fafafa; }
.log { margin-top: 30px; font-size: 14px; line-height: 20px; font-weight: bold; display: flex; align-items: center; gap: 6px; }
.log i { border: 3.500px solid transparent; border-top: 5px solid #333; border-bottom: 0; }
```

FILE: fit.js
```js
// Spreads each label's letters so that the line takes its nominal width.
document.querySelectorAll('[data-w]').forEach(function (el) {
  var range = document.createRange();
  range.selectNodeContents(el);
  var natural = range.getBoundingClientRect().width;
  var count = el.textContent.length;
  el.style.letterSpacing = ((Number(el.dataset.w) - natural) / count).toFixed(3) + 'px';
});
```
